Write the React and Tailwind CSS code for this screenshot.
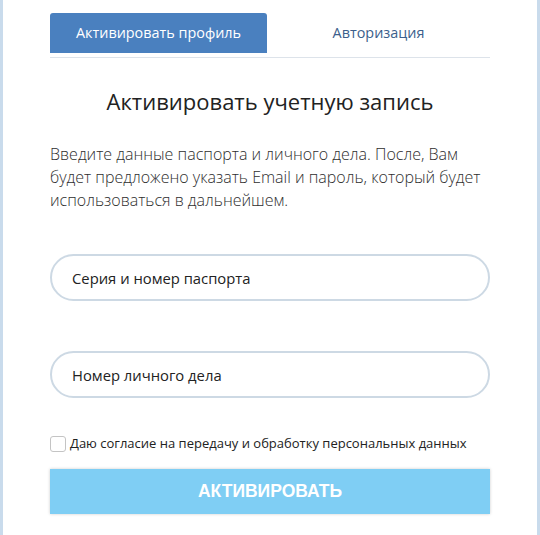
export default function App() {
  return (
    <div
      className="w-[540px] h-[535px] bg-white border-x-[3px] border-[#c9dbec] overflow-hidden"
      style={{ fontFamily: '"Open Sans", "Noto Sans", sans-serif' }}
    >
      <div className="px-[47px] pt-[13px]">
        {/* Tabs */}
        <div className="flex border-b border-[#dde3ea] pb-[4px]">
          <div className="w-[217px] h-[40px] flex items-center justify-center bg-[#4a80bf] rounded-t-[3px] text-white text-[14.4px]">
            Активировать профиль
          </div>
          <div className="flex-1 h-[40px] flex items-center justify-center text-[#3c5f8c] text-[14.4px]">
            Авторизация
          </div>
        </div>

        {/* Title */}
        <h1 className="mt-[29px] text-center text-[22px] text-[#222] leading-[28px]">
          Активировать учетную запись
        </h1>

        {/* Description */}
        <p className="mt-[28px] text-[16px] leading-[23px] text-[#2e2e2e] font-light whitespace-nowrap">
          Введите данные паспорта и личного дела. После, Вам<br />
          будет предложено указать Email и пароль, который будет<br />
          использоваться в дальнейшем.
        </p>

        {/* Inputs */}
        <div className="mt-[42px] flex flex-col gap-[50px]">
          <input
            className="h-[47px] w-full rounded-full border-2 border-[#cdd9e4] px-[20px] text-[14.8px] text-[#222] placeholder:text-[#222] outline-none"
            placeholder="Серия и номер паспорта"
          />
          <input
            className="h-[47px] w-full rounded-full border-2 border-[#cdd9e4] px-[20px] text-[14.8px] text-[#222] placeholder:text-[#222] outline-none"
            placeholder="Номер личного дела"
          />
        </div>

        {/* Consent */}
        <label className="mt-[36px] flex items-center gap-[4px] text-[13px] text-[#222]">
          <span className="w-[16px] h-[16px] border border-[#c4c4c4] rounded-[3px] bg-white" />
          Даю согласие на передачу и обработку персональных данных
        </label>

        {/* Button */}
        <button className="mt-[15px] w-full h-[45px] bg-[#7fcef4] text-white font-bold text-[17.5px] uppercase shadow-[0_0_3px_rgba(0,0,0,0.2)]" style={{ fontFamily: '"Liberation Sans", Arial, sans-serif' }}>
          Активировать
        </button>
      </div>
    </div>
  );
}
